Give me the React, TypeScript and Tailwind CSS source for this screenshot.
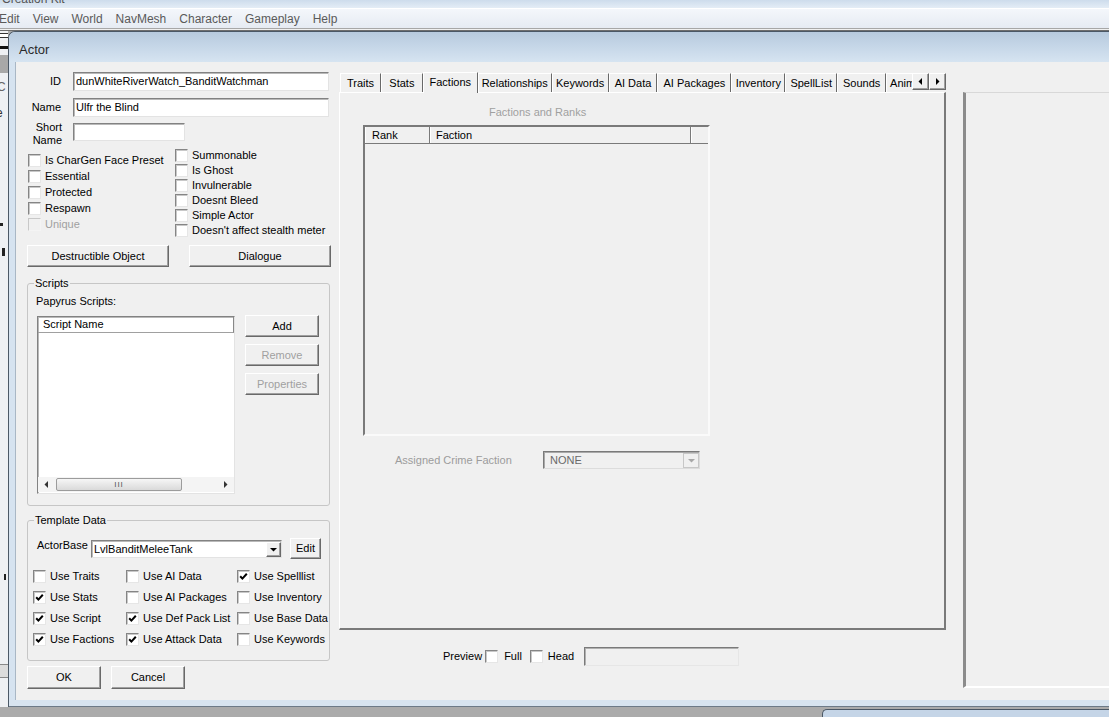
import React from "react";

// classic win32 bits
const raised =
  "bg-[#f0f0f0] border border-t-white border-l-white border-r-[#696969] border-b-[#696969] shadow-[inset_-1px_-1px_0_#a0a0a0]";
const sunken =
  "border border-t-[#828282] border-l-[#828282] border-r-[#e3e3e3] border-b-[#e3e3e3] shadow-[inset_1px_1px_0_#b9b9b9]";

const Box = ({ on = false, dim = false }: { on?: boolean; dim?: boolean }) => (
  <span
    className={`w-[13px] h-[13px] shrink-0 flex items-center justify-center border ${
      dim
        ? "bg-[#f0f0f0] border-t-[#c8c8c8] border-l-[#c8c8c8] border-r-[#f4f4f4] border-b-[#f4f4f4]"
        : "bg-white border-t-[#858585] border-l-[#858585] border-r-[#e6e6e6] border-b-[#e6e6e6] shadow-[inset_1px_1px_0_#c8c8c8]"
    }`}
  >
    {on && (
      <svg width="9" height="9" viewBox="0 0 9 9">
        <polyline points="1.2,4.2 3.4,6.6 7.8,1.8" fill="none" stroke="#000" strokeWidth="2" />
      </svg>
    )}
  </span>
);

const Chk = ({ label, on, dim, h }: { label: string; on?: boolean; dim?: boolean; h: string }) => (
  <div className={`flex items-center gap-[4px] ${h}`}>
    <Box on={on} dim={dim} />
    <span className={`whitespace-nowrap ${dim ? "text-[#a0a0a0]" : ""}`}>{label}</span>
  </div>
);

const Btn = ({ children, off, cls }: { children: React.ReactNode; off?: boolean; cls: string }) => (
  <div className={`${raised} ${cls} flex items-center justify-center ${off ? "text-[#a0a0a0]" : ""}`}>{children}</div>
);

const tabs = [
  { t: "Traits", w: "w-[41px]" },
  { t: "Stats", w: "w-[42px]" },
  { t: "Factions", w: "w-[55px]", on: true },
  { t: "Relationships", w: "w-[74px]" },
  { t: "Keywords", w: "w-[57px]" },
  { t: "AI Data", w: "w-[49px]" },
  { t: "AI Packages", w: "w-[74px]" },
  { t: "Inventory", w: "w-[54px]" },
  { t: "SpellList", w: "w-[52px]" },
  { t: "Sounds", w: "w-[49px]" },
];

const Tri = ({ dir, color = "#000" }: { dir: "l" | "r" | "d"; color?: string }) => (
  <svg width="7" height="7" viewBox="0 0 7 7">
    {dir === "l" && <polygon points="5,0 5,7 1.5,3.5" fill={color} />}
    {dir === "r" && <polygon points="2,0 2,7 5.5,3.5" fill={color} />}
    {dir === "d" && <polygon points="0,2 7,2 3.5,5.5" fill={color} />}
  </svg>
);

export default function App() {
  return (
    <div className="w-[1109px] h-[717px] overflow-hidden bg-[#ababab] flex flex-col font-['Liberation_Sans',Arial,sans-serif] text-[11px] text-black leading-none">
      {/* parent app title remnant */}
      <div className="h-[8px] overflow-hidden bg-gradient-to-b from-[#cddcec] to-[#e4edf6]">
        <div className="-mt-[8px] pl-[2px] text-[12px] text-[#555] leading-[14px]">Creation Kit</div>
      </div>
      {/* parent menu bar */}
      <div className="h-[20px] bg-gradient-to-b from-[#f4f7fb] to-[#e6ebf3] border-t border-white flex items-center gap-[13px] -ml-[1px] text-[12px] text-[#5a5a5a]">
        <span>Edit</span>
        <span>View</span>
        <span>World</span>
        <span>NavMesh</span>
        <span>Character</span>
        <span>Gameplay</span>
        <span>Help</span>
      </div>
      <div className="h-[3px] bg-[#f0f0f0] border-t border-[#a7a7a7] border-b border-b-[#6d6d6d]" />

      <div className="flex h-[676px]">
        {/* sliver of window behind */}
        <div className="w-[8px] bg-[#eef0f3] flex flex-col overflow-hidden">
          <div className="h-[5px] mt-[2px] bg-white border-y border-[#333]" />
          <div className="h-[3px] mt-[8px] bg-[#111]" />
          <div className="h-[18px] mt-[6px] bg-[#a8a8a8]" />
          <div className="mt-[8px] text-[12px] text-[#666] -ml-[3px]">C</div>
          <div className="mt-[14px] text-[12px] text-[#333] -ml-[4px]">e</div>
          <div className="h-[3px] w-[3px] mt-[104px] bg-[#222]" />
          <div className="h-[8px] w-[3px] mt-[22px] ml-[2px] bg-[#222]" />
          <div className="h-[6px] w-[2px] mt-[318px] ml-[4px] bg-[#222]" />
          <div className="h-[14px] mt-[84px] bg-[#dcdcdc] border-y border-[#888]" />
        </div>

        {/* Actor dialog */}
        <div className="flex-1 flex flex-col border-l border-t border-[#4b5866] rounded-tl-[7px] overflow-hidden bg-[#d9e5f1]">
          <div className="h-[30px] shrink-0 bg-gradient-to-b from-[#b7cade] via-[#c6d7e8] to-[#d6e4f1] flex items-center pl-[10px] pt-[4px] text-[13px] text-[#2a2a2a]">
            Actor
          </div>
          <div className="flex h-[638px]">
            <div className="w-[6px] shrink-0 bg-[#d6e3f0]" />
            <div className="flex-1 bg-[#f0f0f0] border-l border-[#a9b7c5] flex items-start">
              {/* left column */}
              <div className="w-[323px] shrink-0 pl-[11px] flex flex-col">
                <div className="flex items-center mt-[10px]">
                  <span className="w-[34px] text-right mr-[12px]">ID</span>
                  <div className={`w-[256px] h-[19px] bg-white ${sunken} flex items-center pl-[2px]`}>dunWhiteRiverWatch_BanditWatchman</div>
                </div>
                <div className="flex items-center mt-[7px]">
                  <span className="w-[34px] text-right mr-[12px]">Name</span>
                  <div className={`w-[256px] h-[19px] bg-white ${sunken} flex items-center pl-[2px]`}>Ulfr the Blind</div>
                </div>
                <div className="flex items-start mt-[6px]">
                  <span className="w-[35px] text-right mr-[11px] leading-[13px] -mt-[2px]">
                    Short
                    <br />
                    Name
                  </span>
                  <div className={`w-[112px] h-[18px] bg-white ${sunken}`} />
                </div>

                <div className="flex">
                  <div className="w-[147px] ml-[1px] mt-[5px] flex flex-col">
                    <Chk h="h-[16px]" label="Is CharGen Face Preset" />
                    <Chk h="h-[16px]" label="Essential" />
                    <Chk h="h-[16px]" label="Protected" />
                    <Chk h="h-[16px]" label="Respawn" />
                    <Chk h="h-[16px]" label="Unique" dim />
                  </div>
                  <div className="flex flex-col mt-[1px]">
                    <Chk h="h-[15px]" label="Summonable" />
                    <Chk h="h-[15px]" label="Is Ghost" />
                    <Chk h="h-[15px]" label="Invulnerable" />
                    <Chk h="h-[15px]" label="Doesnt Bleed" />
                    <Chk h="h-[15px]" label="Simple Actor" />
                    <Chk h="h-[15px]" label="Doesn't affect stealth meter" />
                  </div>
                </div>

                <div className="flex gap-[20px] mt-[7px]">
                  <Btn cls="w-[142px] h-[22px]">Destructible Object</Btn>
                  <Btn cls="w-[142px] h-[22px]">Dialogue</Btn>
                </div>

                <fieldset className="w-[303px] min-w-0 h-[230px] mt-[9px] border border-[#c6c6c6] rounded-[3px] px-[8px]">
                  <legend className="-ml-[2px] px-[1px] leading-[14px]">Scripts</legend>
                  <div className="mt-[4px] leading-[14px]">Papyrus Scripts:</div>
                  <div className="flex mt-[8px]">
                    <div className={`w-[198px] h-[178px] ml-[1px] bg-white ${sunken} flex flex-col`}>
                      <div className="h-[16px] shrink-0 border-b border-[#a0a0a0] border-r border-r-[#888] flex items-center pl-[5px]">Script Name</div>
                      <div className="flex-1" />
                      <div className="h-[15px] mb-[1px] flex items-center bg-[#f4f4f4]">
                        <div className="w-[17px] flex justify-center"><Tri dir="l" color="#333" /></div>
                        <div className="w-[126px] h-[13px] ml-[1px] rounded-[2px] border border-[#9c9c9c] bg-gradient-to-b from-[#f6f6f6] to-[#dadada] flex items-center justify-center text-[8px] tracking-[1px] text-[#555]">
                          III
                        </div>
                        <div className="flex-1 flex justify-end pr-[5px]"><Tri dir="r" color="#333" /></div>
                      </div>
                    </div>
                    <div className="ml-[10px] -mt-[1px] flex flex-col gap-[7px]">
                      <Btn cls="w-[74px] h-[22px]">Add</Btn>
                      <Btn cls="w-[74px] h-[22px]" off>Remove</Btn>
                      <Btn cls="w-[74px] h-[22px]" off>Properties</Btn>
                    </div>
                  </div>
                </fieldset>

                <fieldset className="w-[303px] min-w-0 h-[148px] mt-[7px] border border-[#c6c6c6] rounded-[3px] px-[8px]">
                  <legend className="-ml-[2px] px-[1px] leading-[14px]">Template Data</legend>
                  <div className="flex items-start mt-[11px] ml-[1px]">
                    <span className="mt-[2px] w-[54px]">ActorBase</span>
                    <div className={`w-[191px] h-[18px] mt-[2px] bg-white ${sunken} flex items-center pl-[2px]`}>
                      <span className="flex-1">LvlBanditMeleeTank</span>
                      <div className={`${raised} w-[15px] h-[15px] flex items-center justify-center`}>
                        <Tri dir="d" />
                      </div>
                    </div>
                    <Btn cls="w-[31px] h-[21px] ml-[8px]">Edit</Btn>
                  </div>
                  <div className="flex mt-[7px] -ml-[3px]">
                    <div className="w-[93px] shrink-0 flex flex-col">
                      <Chk h="h-[21px]" label="Use Traits" />
                      <Chk h="h-[21px]" label="Use Stats" on />
                      <Chk h="h-[21px]" label="Use Script" on />
                      <Chk h="h-[21px]" label="Use Factions" on />
                    </div>
                    <div className="w-[111px] shrink-0 flex flex-col">
                      <Chk h="h-[21px]" label="Use AI Data" />
                      <Chk h="h-[21px]" label="Use AI Packages" />
                      <Chk h="h-[21px]" label="Use Def Pack List" on />
                      <Chk h="h-[21px]" label="Use Attack Data" on />
                    </div>
                    <div className="shrink-0 flex flex-col">
                      <Chk h="h-[21px]" label="Use Spelllist" on />
                      <Chk h="h-[21px]" label="Use Inventory" />
                      <Chk h="h-[21px]" label="Use Base Data" />
                      <Chk h="h-[21px]" label="Use Keywords" />
                    </div>
                  </div>
                </fieldset>

                <div className="flex gap-[10px] mt-[5px]">
                  <Btn cls="w-[74px] h-[23px]">OK</Btn>
                  <Btn cls="w-[74px] h-[23px]">Cancel</Btn>
                </div>
              </div>

              {/* tab control + preview row */}
              <div className="w-[607px] shrink-0 flex flex-col">
                <div className="flex items-end h-[20px] mt-[10px] ml-[1px]">
                  {tabs.map((t) =>
                    t.on ? (
                      <div
                        key={t.t}
                        className={`${t.w} h-[21px] -mb-[1px] relative z-10 bg-[#f0f0f0] border-t border-l border-white border-r border-r-[#696969] flex items-start justify-center pt-[4px]`}
                      >
                        {t.t}
                      </div>
                    ) : (
                      <div
                        key={t.t}
                        className={`${t.w} h-[19px] border-t border-l border-white border-r border-r-[#696969] flex items-center justify-center`}
                      >
                        {t.t}
                      </div>
                    )
                  )}
                  <div className="w-[26px] h-[19px] overflow-hidden border-t border-l border-white pl-[3px] flex items-center whitespace-nowrap">
                    Animation
                  </div>
                  <div className="flex self-start mt-[1px]">
                    <div className={`${raised} w-[17px] h-[17px] flex items-center justify-center`}><Tri dir="l" /></div>
                    <div className={`${raised} w-[17px] h-[17px] flex items-center justify-center`}><Tri dir="r" /></div>
                  </div>
                </div>

                <div className="w-[607px] h-[538px] border-l border-t border-white border-r-2 border-b-2 border-r-[#7a7a7a] border-b-[#7a7a7a] flex flex-col">
                  <div className="mt-[12px] ml-[149px] leading-[14px] text-[#a0a0a0]">Factions and Ranks</div>
                  <div className="w-[347px] h-[311px] mt-[6px] ml-[23px] border-2 border-t-[#7a7a7a] border-l-[#7a7a7a] border-r-[#fafafa] border-b-[#fafafa] bg-[#f0f0f0] flex flex-col">
                    <div className="h-[17px] flex border-b border-[#7a7a7a]">
                      <div className="w-[65px] border-l border-white border-r border-r-[#7a7a7a] flex items-center pl-[6px]">Rank</div>
                      <div className="w-[261px] border-l border-white border-r border-r-[#7a7a7a] flex items-center pl-[5px]">Faction</div>
                      <div className="flex-1 border-l border-white" />
                    </div>
                  </div>
                  <div className="flex items-center mt-[15px] ml-[55px]">
                    <span className="w-[148px] text-[#9c9c9c]">Assigned Crime Faction</span>
                    <div className="w-[157px] h-[18px] border border-t-[#7a7a7a] border-l-[#7a7a7a] border-r-[#dcdcdc] border-b-[#dcdcdc] shadow-[inset_1px_1px_0_#a9a9a9] bg-[#f0f0f0] flex items-center pl-[6px] text-[#6a6a6a]">
                      <span className="flex-1">NONE</span>
                      <div className="w-[16px] h-[15px] border border-[#c7c7c7] bg-[#f0f0f0] flex items-center justify-center">
                        <Tri dir="d" color="#a8a8a8" />
                      </div>
                    </div>
                  </div>
                </div>

                <div className="flex items-center h-[19px] mt-[17px] ml-[104px]">
                  <span>Preview</span>
                  <span className="ml-[3px]"><Box /></span>
                  <span className="ml-[6px]">Full</span>
                  <span className="ml-[8px]"><Box /></span>
                  <span className="ml-[5px]">Head</span>
                  <div className="w-[155px] h-[19px] ml-[10px] border border-t-[#7a7a7a] border-l-[#7a7a7a] border-r-[#e6e6e6] border-b-[#e6e6e6] shadow-[inset_1px_1px_0_#b0b0b0] bg-[#f0f0f0]" />
                </div>
              </div>

              {/* preview frame */}
              <div className="flex-1 h-[596px] mt-[30px] ml-[17px] border-l-[3px] border-l-[#8b8b8b] border-b-2 border-b-white border-t border-t-[#d8d8d8]" />
            </div>
          </div>
          <div className="h-[7px] shrink-0 bg-[#d8e4f0] border-b border-[#6d7a88]" />
        </div>
      </div>

      <div className="flex-1 flex">
        <div className="w-[822px]" />
        <div className="flex-1 mt-[2px] bg-[#c5d5e7] border-t border-l border-[#4b5866] rounded-tl-[5px]" />
      </div>
    </div>
  );
}
